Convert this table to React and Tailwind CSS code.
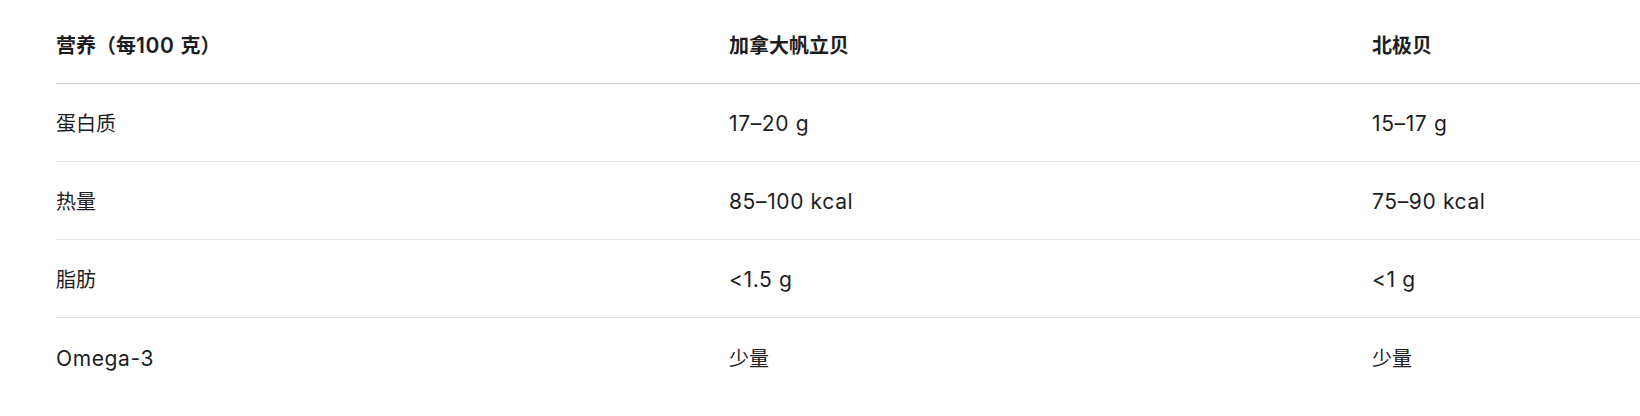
function T({ children }) {
  const parts = String(children).split(/([\u3000-\u9fff\uff00-\uffef]+)/);
  return (
    <>
      {parts.map((p, i) =>
        p === "" ? null : /[\u3000-\u9fff\uff00-\uffef]/.test(p) ? (
          <span key={i}>{p}</span>
        ) : (
          <span key={i} className="text-[21px] tracking-[0.03em]">{p}</span>
        )
      )}
    </>
  );
}

export default function App() {
  const rows = [
    ["蛋白质", "17–20 g", "15–17 g"],
    ["热量", "85–100 kcal", "75–90 kcal"],
    ["脂肪", "<1.5 g", "<1 g"],
    ["Omega-3", "少量", "少量"],
  ];
  const font = { fontFamily: 'Inter, "Noto Sans CJK SC", sans-serif' };
  return (
    <div className="w-[1640px] h-[416px] bg-white pl-[56px] overflow-hidden text-[#1d1d1f]" style={font}>
      <div className="grid grid-cols-[673px_643px_1fr] h-[84px] pt-[9px] items-center border-b border-[#cccccc] text-[20px] font-semibold">
        <div><T>营养（每100 克）</T></div>
        <div>加拿大帆立贝</div>
        <div>北极贝</div>
      </div>
      {rows.map((r, i) => (
        <div
          key={i}
          className={
            "grid grid-cols-[673px_643px_1fr] h-[78px] pt-[3px] items-center text-[20px] " +
            (i < rows.length - 1 ? "border-b border-[#e3e3e3]" : "")
          }
        >
          <div><T>{r[0]}</T></div>
          <div><T>{r[1]}</T></div>
          <div><T>{r[2]}</T></div>
        </div>
      ))}
    </div>
  );
}
